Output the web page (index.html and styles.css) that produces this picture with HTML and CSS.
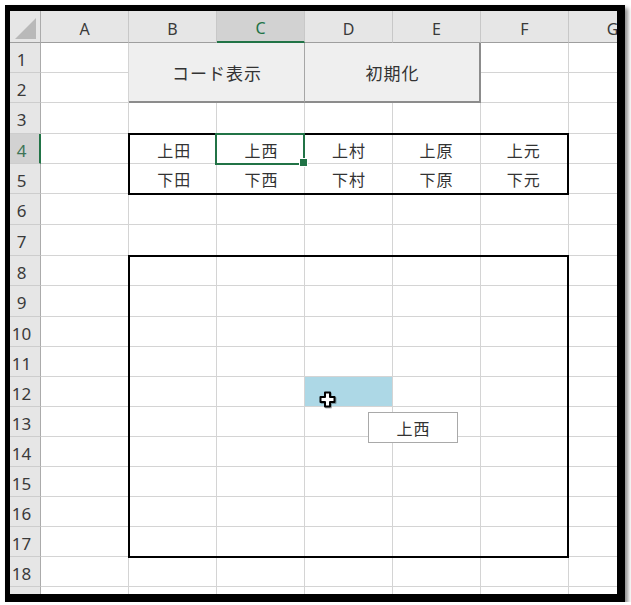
FILE: index.html
```html
<!DOCTYPE html>
<html lang="ja">
<head>
<meta charset="utf-8">
<title>Sheet</title>
<link rel="stylesheet" href="styles.css">
</head>
<body>
<div class="frame">
  <div class="sheet">
    <div class="base">
      <div class="corner"><svg width="31" height="32" viewBox="0 0 31 32"><polygon points="5,28 26,28 26,7" fill="#b9b9b9"/></svg></div>
      <div class="colhead">A</div>
      <div class="colhead">B</div>
      <div class="colhead sel">C</div>
      <div class="colhead">D</div>
      <div class="colhead">E</div>
      <div class="colhead">F</div>
      <div class="colhead">G</div>

      <div class="rowhead">1</div><div class="strip"></div>
      <div class="rowhead">2</div><div class="strip"></div>
      <div class="rowhead">3</div><div class="strip"></div>
      <div class="rowhead sel">4</div><div class="strip"></div>
      <div class="rowhead">5</div><div class="strip"></div>
      <div class="rowhead">6</div><div class="strip"></div>
      <div class="rowhead">7</div><div class="strip"></div>
      <div class="rowhead">8</div><div class="strip"></div>
      <div class="rowhead">9</div><div class="strip"></div>
      <div class="rowhead">10</div><div class="strip"></div>
      <div class="rowhead">11</div><div class="strip"></div>
      <div class="rowhead">12</div><div class="strip"></div>
      <div class="rowhead">13</div><div class="strip"></div>
      <div class="rowhead">14</div><div class="strip"></div>
      <div class="rowhead">15</div><div class="strip"></div>
      <div class="rowhead">16</div><div class="strip"></div>
      <div class="rowhead">17</div><div class="strip"></div>
      <div class="rowhead">18</div><div class="strip"></div>
      <div class="rowhead"></div><div class="strip"></div>
    </div>

    <div class="overlay">
      <button class="btn btn-show">コード表示</button>
      <button class="btn btn-init">初期化</button>
      <div class="hl"></div>
      <div class="names">
        <span>上田</span><span>上西</span><span>上村</span><span>上原</span><span>上元</span>
        <span>下田</span><span>下西</span><span>下村</span><span>下原</span><span>下元</span>
      </div>
      <div class="sel-cell"></div>
      <div class="box"></div>
    </div>

    <div class="tooltip">上西</div>
    <svg class="cursor" width="17" height="17" viewBox="0 0 17 17">
      <polygon points="6,1.5 11,1.5 11,6 15.5,6 15.5,11 11,11 11,15.5 6,15.5 6,11 1.5,11 1.5,6 6,6" fill="#fff" stroke="#000" stroke-width="2" stroke-linejoin="round"/>
    </svg>
  </div>
</div>
</body>
</html>
```
FILE: styles.css
```css
* { box-sizing: border-box; }

body {
  margin: 0;
  background: #fff;
  font-family: "Noto Sans CJK JP", "Noto Sans", sans-serif;
}

.frame {
  margin: 5px 0 0 5px;
  width: 620px;
  height: 597px;
  border-style: solid;
  border-color: #000;
  border-width: 6px 8px 8px 5px;
  box-shadow: 3px 3px 4px rgba(0, 0, 0, 0.45);
}

.sheet {
  position: relative;
  display: grid;
  width: 607px;
  height: 583px;
  overflow: hidden;
  background: #fff;
}

.sheet > * { grid-area: 1 / 1; }

.base,
.overlay {
  display: grid;
  grid-template-columns: 31px repeat(7, 88px);
  grid-template-rows: 32px 30px 30px 31px 30px 30px 31px 31px 30px 31px repeat(10, 30px);
}

.corner {
  background: #e6e6e6;
  border-right: 1px solid #ababab;
  border-bottom: 1px solid #9e9e9e;
}
.corner svg { display: block; }

.colhead {
  display: flex;
  align-items: center;
  justify-content: center;
  padding-top: 4px;
  background: #e6e6e6;
  border-right: 1px solid #c8c8c8;
  border-bottom: 1px solid #9e9e9e;
  font-family: "Noto Sans", sans-serif;
  font-size: 16px;
  color: #3a3a3a;
}
.colhead.sel {
  background: #d2d2d2;
  color: #217346;
  border-bottom: 2px solid #217346;
}

.rowhead {
  grid-column: 1;
  display: flex;
  align-items: center;
  justify-content: center;
  padding: 3px 7px 0 0;
  background: #e6e6e6;
  border-right: 1px solid #ababab;
  border-bottom: 1px solid #cdcdcd;
  font-family: "Noto Sans", sans-serif;
  font-size: 17px;
  color: #3a3a3a;
}
.rowhead.sel {
  background: #d2d2d2;
  color: #3d7556;
  border-right: 2px solid #217346;
  padding-right: 6px;
}

.strip {
  grid-column: 2 / -1;
  border-bottom: 1px solid #d4d4d4;
  background: repeating-linear-gradient(to right, transparent 0 87px, #d4d4d4 87px 88px);
}

.btn {
  margin: 0;
  padding: 0 0 0 1px;
  border: 0;
  background: #efefef;
  font-family: "Noto Sans CJK JP", sans-serif;
  font-size: 17px;
  letter-spacing: 1px;
  color: #333;
  border-bottom: 2px solid #8c8c8c;
}
.btn-show {
  grid-column: 3 / 5;
  grid-row: 2 / 4;
  border-right: 1px solid #a6a6a6;
}
.btn-init {
  grid-column: 5 / 7;
  grid-row: 2 / 4;
  border-right: 2px solid #8c8c8c;
}

.hl {
  grid-column: 5;
  grid-row: 13;
  background: #add8e6;
  border-right: 1px solid #d4d4d4;
  border-bottom: 1px solid #d4d4d4;
}

.names {
  grid-column: 3 / 8;
  grid-row: 5 / 7;
  margin: -1px 0 -1px -1px;
  border: 2px solid #000;
  display: grid;
  grid-template-columns: repeat(5, 1fr);
  grid-template-rows: 1fr 1fr;
}
.names span {
  display: flex;
  align-items: center;
  justify-content: center;
  padding: 0 0 0 1px;
  font-size: 16px;
  letter-spacing: 1px;
  color: #333;
}

.sel-cell {
  position: relative;
  grid-column: 4;
  grid-row: 5;
  margin: -1px 0 -1px -2px;
  border: 2px solid #217346;
}
.sel-cell::after {
  content: "";
  position: absolute;
  right: -5px;
  bottom: -4px;
  width: 7px;
  height: 7px;
  background: #217346;
  border: 1px solid #fff;
}

.box {
  grid-column: 3 / 8;
  grid-row: 9 / 19;
  margin: -1px 0 -1px -1px;
  border: 2px solid #000;
}

.tooltip {
  position: absolute;
  left: 358px;
  top: 401px;
  width: 90px;
  height: 31px;
  display: flex;
  align-items: center;
  justify-content: center;
  padding: 0 0 0 1px;
  background: #fff;
  border: 1px solid #a9a9a9;
  font-size: 16px;
  letter-spacing: 1px;
  color: #333;
}

.cursor {
  position: absolute;
  left: 309px;
  top: 380px;
  filter: drop-shadow(1px 1px 0 rgba(0, 0, 0, 0.3));
}
```
